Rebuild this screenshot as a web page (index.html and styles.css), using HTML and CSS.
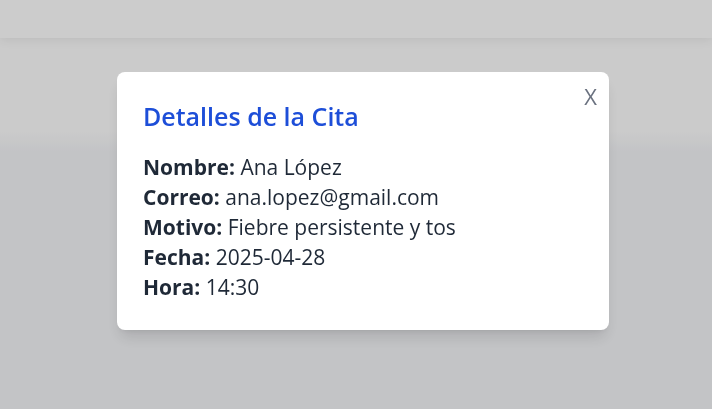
FILE: index.html
```html
<!DOCTYPE html>
<html lang="es">
<head>
<meta charset="utf-8">
<title>Detalles de la Cita</title>
<link rel="stylesheet" href="styles.css">
</head>
<body>
<div class="page">
  <header class="topbar"></header>
  <section class="hero"></section>
  <main class="content"></main>
</div>
<div class="overlay">
  <div class="modal">
    <button class="close">X</button>
    <h2 class="title">Detalles de la Cita</h2>
    <div class="details">
      <p><strong>Nombre:</strong> Ana López</p>
      <p><strong>Correo:</strong> ana.lopez@gmail.com</p>
      <p><strong>Motivo:</strong> Fiebre persistente y tos</p>
      <p><strong>Fecha:</strong> 2025-04-28</p>
      <p><strong>Hora:</strong> 14:30</p>
    </div>
  </div>
</div>
</body>
</html>
```
FILE: styles.css
```css
html, body {
  margin: 0;
  padding: 0;
  height: 100%;
}
body {
  font-family: "Open Sans", "Noto Sans", sans-serif;
  background: #f4f5f8;
  overflow: hidden;
}
.page {
  display: flex;
  flex-direction: column;
  height: 100%;
}
.topbar {
  height: 38px;
  background: #ffffff;
  box-shadow: 0 2px 10px rgba(0,0,0,0.08);
  position: relative;
  z-index: 1;
}
.hero {
  height: 114px;
  background: linear-gradient(#fefefe 0%, #fefefe 82%, #f4f5f8 100%);
}
.content {
  flex: 1;
}
.overlay {
  position: fixed;
  inset: 0;
  background: rgba(0,0,0,0.2);
  display: flex;
  align-items: flex-start;
  padding: 72px 0 0 117px;
  z-index: 10;
}
.modal {
  position: relative;
  width: 492px;
  height: 258px;
  box-sizing: border-box;
  background: #ffffff;
  border-radius: 8px;
  box-shadow: 0 10px 15px -3px rgba(0,0,0,0.12), 0 4px 6px -4px rgba(0,0,0,0.1);
  padding: 28px 26px;
}
.close {
  position: absolute;
  top: 11px;
  right: 12px;
  border: 0;
  background: none;
  padding: 0;
  font-family: inherit;
  font-size: 22px;
  font-weight: 400;
  line-height: 26px;
  color: #6b7280;
  cursor: pointer;
}
.title {
  margin: 0 0 20px;
  font-size: 25px;
  line-height: 32px;
  font-weight: 600;
  color: #1d4ed8;
}
.details p {
  margin: 0;
  font-size: 21px;
  line-height: 30px;
  color: #1f2937;
}
.details strong {
  font-weight: 700;
}
```
